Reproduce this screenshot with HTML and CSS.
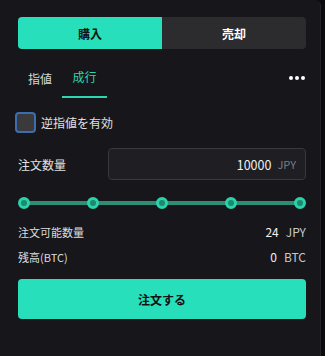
FILE: index.html
```html
<!DOCTYPE html>
<html lang="ja">
<head>
  <meta charset="UTF-8">
  <title>注文</title>
  <link rel="stylesheet" href="styles.css">
</head>
<body>

  <div class="panel">
    <div class="side">
      <button class="side-btn active">購入</button>
      <button class="side-btn">売却</button>
    </div>

    <div class="types">
      <span class="type">指値</span>
      <span class="type active">成行</span>
      <span class="more"><i></i><i></i><i></i></span>
    </div>

    <label class="stop">
      <span class="box"></span>
      <span>逆指値を有効</span>
    </label>

    <div class="qty">
      <span class="qty-label">注文数量</span>
      <div class="input">
        <span class="val">10000</span>
        <span class="unit">JPY</span>
      </div>
    </div>

    <div class="slider">
      <span class="dot"></span>
      <span class="dot"></span>
      <span class="dot"></span>
      <span class="dot"></span>
      <span class="dot"></span>
    </div>

    <div class="row">
      <span>注文可能数量</span>
      <span class="num">24<span class="cur">JPY</span></span>
    </div>
    <div class="row">
      <span>残高(BTC)</span>
      <span class="num">0<span class="cur">BTC</span></span>
    </div>

    <button class="order">注文する</button>
  </div>

</body>
</html>
```

FILE: styles.css
```css
body {
  margin: 0;
  background: #0b0b0d;
  font-family: "Noto Sans CJK JP", "Noto Sans", sans-serif;
  color: #e6e6e6;
}

.panel {
  width: 321px;
  height: 356px;
  box-sizing: border-box;
  background: #16161b;
  border-right: 1px solid #242428;
  border-radius: 0 6px 0 0;
  padding: 17px 14px 0 18px;
}

.side {
  display: flex;
}

.side-btn {
  flex: 1;
  height: 32px;
  border: none;
  background: #2c2c2e;
  color: #fff;
  font-family: inherit;
  font-size: 12px;
  font-weight: bold;
  border-radius: 0 4px 4px 0;
}

.side-btn.active {
  background: #27dfbb;
  color: #111;
  border-radius: 4px 0 0 4px;
}

.types {
  display: flex;
  align-items: flex-end;
  height: 49px;
}

.type {
  font-size: 12px;
  color: #d8d8d8;
  padding: 0 10px;
  line-height: 39px;
}

.type.active {
  color: #2bd6b0;
  padding: 0;
  width: 45px;
  text-align: center;
  border-bottom: 2px solid #2bd6b0;
}

.more {
  margin-left: auto;
  align-self: center;
  margin-top: 8px;
  display: flex;
  gap: 2px;
  padding-right: 1px;
}

.more i {
  width: 4px;
  height: 4px;
  border-radius: 50%;
  background: #fff;
}

.stop {
  display: flex;
  align-items: center;
  gap: 5px;
  margin: 14px 0 0 -3px;
  font-size: 12px;
  color: #e0e0e0;
}

.box {
  width: 17px;
  height: 17px;
  border: 2px solid #3b6db0;
  border-radius: 4px;
  background: #3a3a3d;
}

.qty {
  display: flex;
  align-items: center;
  margin-top: 15px;
}

.qty-label {
  width: 90px;
  font-size: 12px;
  color: #e0e0e0;
}

.input {
  flex: 1;
  height: 30px;
  border: 1px solid #38383d;
  border-radius: 4px;
  background: #1e1e23;
  display: flex;
  align-items: center;
  justify-content: flex-end;
  padding-right: 9px;
  gap: 6px;
}

.val {
  font-size: 12.5px;
  color: #f0f0f0;
}

.unit {
  font-size: 11px;
  color: #7d7d82;
}

.slider {
  display: flex;
  justify-content: space-between;
  align-items: center;
  margin-top: 16px;
  height: 14px;
  background: linear-gradient(#2f8d76, #2f8d76) center / calc(100% - 12px) 4px no-repeat;
}

.dot {
  width: 6px;
  height: 6px;
  border-radius: 50%;
  background: #1c8a6d;
  border: 3px solid #2bd2ab;
}

.row {
  display: flex;
  justify-content: space-between;
  align-items: center;
  font-size: 11px;
  color: #dcdcdc;
  height: 25px;
}

.slider + .row {
  margin-top: 9px;
}

.num {
  font-size: 12px;
  color: #f0f0f0;
}

.cur {
  margin-left: 7px;
  color: #c8c8c8;
}

.order {
  display: block;
  width: 100%;
  height: 40px;
  margin-top: 10px;
  border: none;
  border-radius: 4px;
  background: #27dfbb;
  color: #111;
  font-family: inherit;
  font-size: 12px;
  font-weight: bold;
}
```
